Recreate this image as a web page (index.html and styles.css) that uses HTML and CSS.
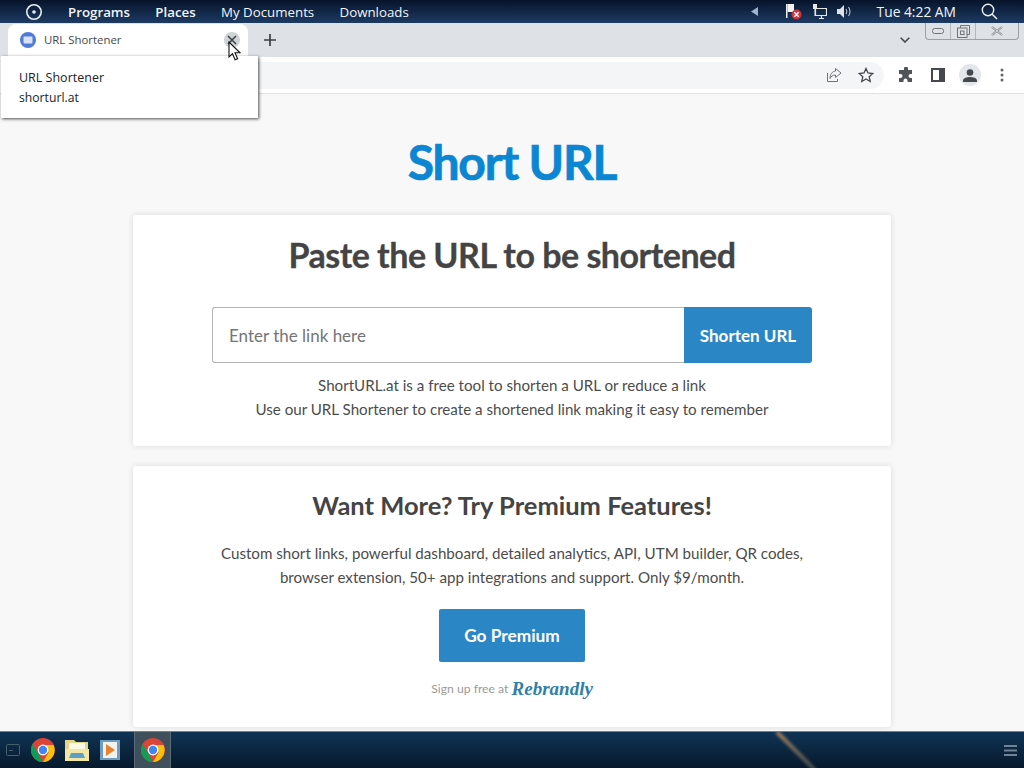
FILE: index.html
```html
<!DOCTYPE html>
<html lang="en">
  <head>
    <meta charset="UTF-8" />
    <title>URL Shortener</title>
    <link rel="stylesheet" href="styles.css">
  </head>
  <body>
    <div class="screen">
      <!-- Desktop top panel -->
      <header class="panel">
        <svg class="panel-logo" width="18" height="18" viewBox="0 0 18 18"><circle cx="9" cy="9" r="7.2" fill="none" stroke="#e8eef5" stroke-width="1.6"/><circle cx="9" cy="9" r="1.8" fill="#e8eef5"/></svg>
        <nav class="panel-menu">
          <span class="strong">Programs</span>
          <span class="strong">Places</span>
          <span>My Documents</span>
          <span>Downloads</span>
        </nav>
        <div class="tray">
          <svg class="tray-arrow" width="7" height="9" viewBox="0 0 7 9"><path d="M7 0v9L0 4.5z" fill="#9fb4cc"/></svg>
          <svg class="tray-flag" width="16" height="16" viewBox="0 0 16 16"><path d="M0 0h1.500v14H0z" fill="#eee"/><path d="M1.500 0H8v8H1.500z" fill="#f2f2f2"/><circle cx="10.500" cy="10.500" r="5" fill="#d2323c"/><path d="M8.300 8.300l4.400 4.400m0-4.400l-4.400 4.400" stroke="#fff" stroke-width="1.400"/></svg>
          <svg class="tray-net" width="15" height="15" viewBox="0 0 15 15"><path d="M3.500 4.500h11v7h-11zM7 14.500h5M9.500 11.500v3" fill="none" stroke="#e6e6e6" stroke-width="1.200"/><path d="M1 0h4v5H1z" fill="#e6e6e6"/><path d="M3 5v7" stroke="#e6e6e6"/></svg>
          <svg class="tray-vol" width="15" height="13" viewBox="0 0 15 13"><path d="M0 4h3l4-4v13L3 9H0z" fill="#dfe3e8"/><path d="M9 4q1.500 2.500 0 5M11.500 2q3 4.500 0 9" fill="none" stroke="#b9c2cc" stroke-width="1.100"/></svg>
          <span class="clock">Tue 4:22 AM</span>
          <svg class="tray-search" width="17" height="17" viewBox="0 0 17 17"><circle cx="7" cy="7" r="5.700" fill="none" stroke="#eef1f5" stroke-width="1.400"/><path d="M11 11l5 5" stroke="#eef1f5" stroke-width="1.500"/></svg>
        </div>
      </header>

      <!-- Browser tabs -->
      <div class="tabstrip">
        <div class="tab">
          <svg width="16" height="16" viewBox="0 0 16 16"><circle cx="8" cy="8" r="8" fill="#4f7ad8"/><rect x="3.500" y="4.500" width="9" height="7" rx="1" fill="#d9e2f5"/></svg>
          <span class="tab-title">URL Shortener</span>
          <span class="tab-close">
            <svg width="10" height="10" viewBox="0 0 10 10"><path d="M1 1l8 8m0-8l-8 8" stroke="#3c4043" stroke-width="1.500"/></svg>
          </span>
        </div>
        <svg class="new-tab" width="12" height="12" viewBox="0 0 12 12"><path d="M6 0v12M0 6h12" stroke="#3c4043" stroke-width="1.700"/></svg>
        <svg class="tab-list" width="10" height="6" viewBox="0 0 10 6"><path d="M.7.7L5 5l4.300-4.300" fill="none" stroke="#45494d" stroke-width="1.600"/></svg>
      </div>

      <!-- Browser toolbar -->
      <div class="toolbar">
        <div class="omnibox">
          <svg width="16" height="16" viewBox="0 0 16 16"><path d="M1.500 6v8.500h10V12" fill="none" stroke="#6f7377" stroke-width="1"/><path d="M9.500 1.500l5.500 4.500-5.500 4.500V8C6.500 8 5 9.500 4 11.500 4 7.500 6 4.500 9.500 4z" fill="none" stroke="#6f7377" stroke-width="1"/></svg>
          <svg width="16" height="16" viewBox="0 0 16 16"><path d="M8 1.500l2 4.500 4.800.5-3.600 3.200 1 4.800L8 12l-4.200 2.500 1-4.800L1.200 6.500 6 6z" fill="none" stroke="#45494d" stroke-width="1.300"/></svg>
        </div>
        <div class="tools">
          <svg width="16" height="16" viewBox="0 0 16 16"><path d="M6 1.500a2 2 0 0 1 4 0V3h4v4h-1.500a2 2 0 0 0 0 4H14v4H9.500v-1.500a2 2 0 0 0-4 0V15H1v-4h1.500a2 2 0 0 0 0-4H1V3h5z" fill="#505458"/></svg>
          <svg width="14" height="14" viewBox="0 0 14 14"><path d="M0 0h14v14H0z" fill="#45494d"/><path d="M2 2h6v10H2z" fill="#fff"/></svg>
          <span class="avatar">
            <svg width="14" height="13" viewBox="0 0 14 13"><circle cx="7" cy="3.500" r="3.300" fill="#45494d"/><path d="M0 13v-1.500C0 9 4 8 7 8s7 1 7 3.500V13z" fill="#45494d"/></svg>
          </span>
          <svg width="4" height="14" viewBox="0 0 4 14"><circle cx="2" cy="2" r="1.500" fill="#5f6368"/><circle cx="2" cy="7" r="1.500" fill="#5f6368"/><circle cx="2" cy="12" r="1.500" fill="#5f6368"/></svg>
        </div>
      </div>

      <!-- Page -->
      <main class="page">
        <h1 class="brand">Short URL</h1>
        <section class="card card-form">
          <h2>Paste the URL to be shortened</h2>
          <form class="url-form">
            <input class="url-input" type="text" placeholder="Enter the link here" />
            <button class="btn btn-short" type="button">Shorten URL</button>
          </form>
          <p>ShortURL.at is a free tool to shorten a URL or reduce a link</p>
          <p>Use our URL Shortener to create a shortened link making it easy to remember</p>
        </section>
        <section class="card card-premium">
          <h3>Want More? Try Premium Features!</h3>
          <p>Custom short links, powerful dashboard, detailed analytics, API, UTM builder, QR codes,</p>
          <p>browser extension, 50+ app integrations and support. Only $9/month.</p>
          <button class="btn btn-premium" type="button">Go Premium</button>
          <div class="signup">Sign up free at <span class="rebrandly">Rebrandly</span></div>
        </section>
      </main>

      <!-- Taskbar -->
      <footer class="taskbar">
        <svg class="show-desktop" width="14" height="12" viewBox="0 0 14 12"><rect x=".5" y=".5" width="13" height="11" rx="1" fill="none" stroke="#46606e"/><path d="M3 6.500h4" stroke="#46606e"/></svg>
        <svg class="chrome" width="24" height="24" viewBox="0 0 24 24"><circle cx="12" cy="12" r="12" fill="#db4437"/><path d="M12 24A12 12 0 0 1 1.600 6L7 15l5 9z" fill="#0f9d58"/><path d="M12 24l5.500-9.500L12 7h10.500A12 12 0 0 1 12 24z" fill="#f4c20d"/><circle cx="12" cy="12" r="5.400" fill="#fff"/><circle cx="12" cy="12" r="4.200" fill="#4285f4"/></svg>
        <svg class="folder" width="26" height="24" viewBox="0 0 26 24"><path d="M1 2h9l2 2h12v18H1z" fill="#e6d488"/><path d="M5 5h16v8H5z" fill="#fbf8e6"/><path d="M1 11h24v12H1z" fill="#f1e8a8"/><path d="M7 15h12l2 5H5z" fill="#5f9fc7"/></svg>
        <svg class="media" width="20" height="20" viewBox="0 0 20 20"><path d="M0 0h20v20H0z" fill="#6f9cc0"/><path d="M3 2h14v16H3z" fill="#f2f2ee"/><path d="M6 4l9 6-9 6z" fill="#e8822f"/></svg>
        <span class="task-active">
          <svg width="24" height="24" viewBox="0 0 24 24"><circle cx="12" cy="12" r="12" fill="#db4437"/><path d="M12 24A12 12 0 0 1 1.600 6L7 15l5 9z" fill="#0f9d58"/><path d="M12 24l5.500-9.500L12 7h10.500A12 12 0 0 1 12 24z" fill="#f4c20d"/><circle cx="12" cy="12" r="5.400" fill="#fff"/><circle cx="12" cy="12" r="4.200" fill="#4285f4"/></svg>
        </span>
        <span class="streak"></span>
        <svg class="task-menu" width="13" height="11" viewBox="0 0 13 11"><path d="M0 1h13M0 5.500h13M0 10h13" stroke="#6f8296" stroke-width="2"/></svg>
      </footer>

      <!-- Things lying over the browser -->
      <div class="win-controls">
        <span class="win-btn"><svg width="12" height="6" viewBox="0 0 12 6"><rect x=".5" y=".5" width="11" height="5" rx="2" fill="none" stroke="#70757a"/></svg></span>
        <span class="win-btn"><svg width="13" height="13" viewBox="0 0 13 13"><path d="M3.500 3V.5h9v9H10" fill="none" stroke="#70757a"/><rect x=".5" y="3" width="9.500" height="9.500" fill="none" stroke="#70757a"/><rect x="3.500" y="6" width="3.500" height="3.500" fill="none" stroke="#70757a"/></svg></span>
        <span class="win-btn win-close"><svg width="12" height="10" viewBox="0 0 12 10"><path d="M1 1l10 8m0-8L1 9" stroke="#80858a" stroke-width="2.200"/><path d="M1 1l10 8m0-8L1 9" stroke="#e6e8eb" stroke-width=".8"/></svg></span>
      </div>
      <div class="tooltip">
        <div class="tooltip-title">URL Shortener</div>
        <div class="tooltip-host">shorturl.at</div>
      </div>
      <svg class="pointer" width="14" height="20" viewBox="0 0 14 20"><path d="M1 1v15l3.500-3.300 2.600 6 2.500-1-2.600-5.900H12z" fill="#fff" stroke="#111" stroke-width="1.100"/></svg>
    </div>
  </body>
</html>
```

FILE: styles.css
```css
* {
  margin: 0;
  padding: 0;
  box-sizing: border-box;
}

body {
  font-family: "Lato", Arial, sans-serif;
  background-color: #f8f8f8;
}

.screen {
  position: relative;
  display: flex;
  flex-direction: column;
  width: 1024px;
  height: 768px;
  overflow: hidden;
}

/* Top panel */
.panel {
  flex: none;
  display: flex;
  align-items: center;
  height: 23px;
  padding-left: 25px;
  background: linear-gradient(#06132a, #1d3b63);
  color: #f2f5f8;
  font-family: "Open Sans", sans-serif;
  font-size: 13.300px;
}

.panel-menu {
  display: flex;
  gap: 25.300px;
  margin-left: 25px;
}

.strong {
  font-weight: 600;
}

.tray {
  display: flex;
  align-items: center;
  margin-left: auto;
}

.tray-arrow {
  margin-right: 28px;
}

.tray-flag {
  margin-right: 10px;
}

.tray-net {
  margin-right: 10px;
}

.tray-vol {
  margin-right: 25px;
}

.clock {
  margin-right: 25px;
  font-size: 13.800px;
}

.tray-search {
  margin-right: 26px;
}

/* Tabs */
.tabstrip {
  flex: none;
  display: flex;
  align-items: center;
  height: 34px;
  padding-left: 8px;
  background-color: #dee1e6;
}

.tab {
  display: flex;
  align-items: center;
  align-self: flex-end;
  width: 240px;
  height: 33px;
  padding: 0 8px 1px 12px;
  background-color: #fff;
  border-radius: 8px 8px 0 0;
}

.tab-title {
  margin: 0 0 2px 8px;
  font-family: "Open Sans", sans-serif;
  font-size: 11.400px;
  color: #45494d;
}

.tab-close {
  display: flex;
  align-items: center;
  justify-content: center;
  width: 16px;
  height: 16px;
  margin-left: auto;
  background-color: #cfd2d6;
  border-radius: 50%;
}

.new-tab {
  margin-left: 16px;
}

.tab-list {
  margin-left: 624px;
}

/* Toolbar */
.toolbar {
  flex: none;
  display: flex;
  align-items: center;
  height: 37px;
  background-color: #fff;
  border-bottom: 1px solid #dfe1e5;
}

.omnibox {
  display: flex;
  align-items: center;
  justify-content: flex-end;
  gap: 16px;
  width: 876px;
  height: 27px;
  padding-right: 10px;
  margin-left: 8px;
  background-color: #f4f5f6;
  border-radius: 0 14px 14px 0;
}

.tools {
  display: flex;
  align-items: center;
  margin-left: 14px;
}

.tools svg:nth-child(2) {
  margin-left: 17px;
}

.avatar {
  display: flex;
  align-items: center;
  justify-content: center;
  width: 22px;
  height: 22px;
  margin: 0 19px 0 14px;
  background-color: #e3e6ea;
  border-radius: 50%;
}

/* Page */
.page {
  flex: 1;
  display: flex;
  flex-direction: column;
  align-items: center;
  min-height: 0;
  overflow: hidden;
  color: #444;
}

.brand {
  margin-top: 39px;
  font-size: 48px;
  line-height: 58px;
  font-weight: 700;
  letter-spacing: -1.200px;
  -webkit-text-stroke: 0.7px #0b86d2;
  color: #0b86d2;
}

.card {
  flex: none;
  width: 758px;
  background-color: #fff;
  border-radius: 3px;
  box-shadow: 0 0 6px rgba(0, 0, 0, 0.12);
  text-align: center;
}

.card p {
  font-size: 15.150px;
  line-height: 24px;
  color: #4c4c4c;
}

.card-form {
  height: 231px;
  margin-top: 24px;
  padding-top: 18px;
}

.card-form h2 {
  font-size: 34px;
  line-height: 44px;
  font-weight: 700;
  letter-spacing: -0.500px;
  -webkit-text-stroke: 0.3px #444;
}

.url-form {
  display: flex;
  width: 600px;
  height: 56px;
  margin: 30px auto 10px;
}

.url-input {
  flex: 1;
  min-width: 0;
  padding: 0 16px;
  border: 1px solid #b5b5b5;
  border-right: none;
  border-radius: 3px 0 0 3px;
  font-family: inherit;
  font-size: 17px;
}

.url-input::placeholder {
  color: #757575;
  opacity: 1;
}

.btn {
  border: none;
  background-color: #2b86c5;
  color: #fff;
  font-family: inherit;
  font-weight: 700;
  border-radius: 2px;
}

.btn-short {
  width: 128px;
  font-size: 17px;
  border-radius: 0 3px 3px 0;
}

.card-premium {
  height: 261px;
  margin-top: 20px;
  padding-top: 21px;
}

.card-premium h3 {
  font-size: 25.500px;
  line-height: 36px;
  font-weight: 700;
  margin-bottom: 18px;
}

.btn-premium {
  display: block;
  width: 146px;
  height: 53px;
  margin: 20px auto 0;
  font-size: 17.300px;
}

.signup {
  margin-top: 15px;
  font-size: 12.200px;
  line-height: 24px;
  color: #9a9a9a;
}

.rebrandly {
  font-family: "Liberation Serif", serif;
  font-style: italic;
  font-weight: 700;
  font-size: 19px;
  vertical-align: -2px;
  color: #2f7fa8;
}

/* Taskbar */
.taskbar {
  position: relative;
  flex: none;
  display: flex;
  align-items: center;
  height: 37px;
  padding-left: 6px;
  overflow: hidden;
  background: linear-gradient(#0f3354, #07192c);
  border-top: 1px solid #6d8296;
}

.chrome {
  margin-left: 11px;
}

.folder {
  margin-left: 9px;
}

.media {
  margin-left: 10px;
}

.task-active {
  display: flex;
  align-items: center;
  justify-content: center;
  width: 37px;
  height: 36px;
  margin-left: 14px;
  background-color: #3f4f5c;
  border-left: 1px solid #5c6b77;
  border-right: 1px solid #5c6b77;
}

.streak {
  position: absolute;
  left: 794px;
  top: -8px;
  width: 4px;
  height: 54px;
  background: linear-gradient(#a5825a, #3c4a4f);
  transform: rotate(-45deg);
  filter: blur(1.500px);
}

.task-menu {
  margin-left: auto;
  margin-right: 7px;
}

/* Overlays */
.win-controls {
  position: absolute;
  top: 23px;
  right: 5px;
  display: flex;
  height: 17px;
  border: 1px solid #9aa0a6;
  border-top: none;
  border-radius: 0 0 4px 4px;
}

.win-btn {
  display: flex;
  align-items: center;
  justify-content: center;
  width: 25px;
  border-right: 1px solid #b4b8bd;
}

.win-close {
  width: 42px;
  border-right: none;
}

.tooltip {
  position: absolute;
  top: 56px;
  left: 1px;
  width: 257px;
  height: 62px;
  padding: 12px 18px;
  background-color: #fff;
  box-shadow: 1px 1px 3px rgba(0, 0, 0, 0.7);
  font-family: "Open Sans", sans-serif;
  font-size: 12.500px;
  line-height: 20px;
  color: #222;
}

.tooltip-title {
  font-weight: 500;
}

.tooltip-host {
  font-size: 12.200px;
}

.pointer {
  position: absolute;
  left: 228px;
  top: 41px;
}
```
